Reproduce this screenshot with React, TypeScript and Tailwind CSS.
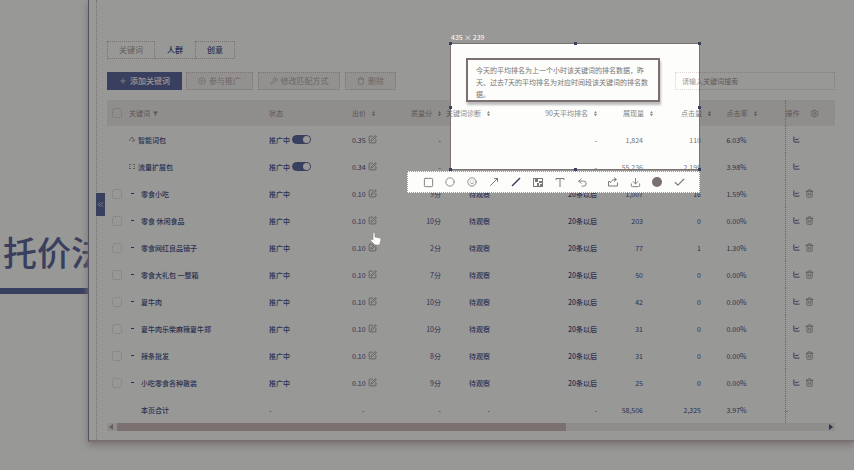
import type { ReactNode } from "react";
import {
  Check,
  ChevronsLeft,
  Circle,
  CirclePlay,
  Download,
  Filter,
  LineChart,
  MoveUpRight,
  Plus,
  Settings,
  Smile,
  Square,
  SquarePen,
  Trash,
  Trash2,
  Undo2,
  Wrench,
} from "lucide-react";

type Row = {
  name: string;
  group?: "smart" | "flow";
  price: string;
  score: string;
  diagnosis: string;
  rank: string;
  views: string;
  clicks: string;
  rate: string;
};

const keyword = (name: string, score: string, views: string, clicks: string, rate: string): Row => ({
  name,
  price: "0.10",
  score,
  diagnosis: "待观察",
  rank: "20条以后",
  views,
  clicks,
  rate,
});

const rows: Row[] = [
  { name: "智能词包", group: "smart", price: "0.35", score: "-", diagnosis: "", rank: "-", views: "1,824", clicks: "110", rate: "6.03%" },
  { name: "流量扩展包", group: "flow", price: "0.34", score: "-", diagnosis: "", rank: "-", views: "55,236", clicks: "2,195", rate: "3.98%" },
  keyword("零食小吃", "9分", "1,007", "16", "1.59%"),
  keyword("零食 休闲食品", "10分", "203", "0", "0.00%"),
  keyword("零食网红良品铺子", "2分", "77", "1", "1.30%"),
  keyword("零食大礼包 一整箱", "7分", "50", "0", "0.00%"),
  keyword("夏牛肉", "10分", "42", "0", "0.00%"),
  keyword("夏牛肉乐柴麻辣夏牛郑", "10分", "31", "0", "0.00%"),
  keyword("辣条批发", "8分", "31", "0", "0.00%"),
  keyword("小吃零食各种散装", "9分", "25", "0", "0.00%"),
];

function Sort() {
  return (
    <svg viewBox="0 0 4 7" className="h-[7px] w-[3px] shrink-0" fill="currentColor" aria-hidden="true">
      <path d="M2 0 4 3H0Z M2 7 0 4H4Z" />
    </svg>
  );
}

function Head({ children, right, tone = "text-[#9c8f8f]", pad = "" }: { children: ReactNode; right?: boolean; tone?: string; pad?: string }) {
  return (
    <th className={`p-0 font-normal ${tone} ${pad}`}>
      <span className={`flex items-center gap-[6px] whitespace-nowrap ${right ? "justify-end" : ""}`}>
        {children}
        <Sort />
      </span>
    </th>
  );
}

function Tool({ label, children }: { label: string; children: ReactNode }) {
  return (
    <button type="button" aria-label={label} className="flex h-5 w-[22px] items-center justify-center">
      {children}
    </button>
  );
}

const disabledButton =
  "flex h-[18px] items-center justify-center gap-[3px] border border-dotted border-[#cfc4c4] bg-[#f5f1f1] text-[8px] text-[#b8abab]";

export default function App() {
  return (
    <div className="relative flex h-screen overflow-hidden bg-[#fdfdfb] font-['Noto_Sans_CJK_SC',sans-serif] text-[7px] leading-[10px] text-[#4a5288]">
      <aside className="w-[88px] shrink-0 overflow-hidden pt-[228px]">
        <h1 className="h-[60px] pl-[3px] text-[34px] leading-[48px] font-medium whitespace-nowrap text-[#60699d]">托价法</h1>
        <div className="h-[6px] bg-[#60699d]" />
      </aside>

      <main className="mb-7 flex min-w-0 flex-1 border-b-2 border-l border-b-[#cbbbbb] border-l-[#8f88a0] pl-[7px] shadow-[0_3px_7px_#c8bebe]">
        <div className="w-[9px] shrink-0 border-l border-dotted border-[#cbbbbb] pt-[193px]">
          <button type="button" aria-label="收起侧栏" className="-ml-px flex h-[23px] w-[9px] items-center justify-center bg-[#60699d] text-[#f4eeee]">
            <ChevronsLeft size={9} />
          </button>
        </div>

        <div className="min-w-0 flex-1 pt-[41px] pr-[19px] pl-[2px]">
          <nav className="flex h-[18px] text-[8px]">
            <button type="button" className="w-12 border border-dotted border-[#cbbbbb] text-[#a89a9a]">关键词</button>
            <button type="button" className="w-10 border-b border-dotted border-[#cbbbbb] font-medium">人群</button>
            <button type="button" className="w-10 border border-dotted border-[#cbbbbb] font-medium">创意</button>
          </nav>

          <div className="mt-[13px] flex h-[18px]">
            <button type="button" className="flex w-[75px] items-center justify-center gap-[3px] bg-[#60699d] text-[8px] font-medium text-[#fdf6f2]">
              <Plus size={8} />
              添加关键词
            </button>
            <button type="button" disabled className={`ml-1 w-[67px] ${disabledButton}`}>
              <CirclePlay size={8} />
              参与推广
            </button>
            <button type="button" disabled className={`ml-[5px] w-[82px] ${disabledButton}`}>
              <Wrench size={8} />
              修改匹配方式
            </button>
            <button type="button" disabled className={`ml-[5px] w-[51px] ${disabledButton}`}>
              <Trash size={8} />
              删除
            </button>
            <input
              type="search"
              aria-label="搜索关键词"
              placeholder="请输入关键词搜索"
              className="ml-auto w-[160px] border border-dotted border-[#ded6d6] bg-transparent pl-[6px] text-[7px] outline-none placeholder:text-[#a09595]"
            />
          </div>

          <table className="mt-[10px] w-full table-fixed border-collapse text-left">
            <colgroup>
              <col />
              <col className="w-[83px]" />
              <col className="w-[55px]" />
              <col className="w-[41px]" />
              <col className="w-[49px]" />
              <col className="w-[107px]" />
              <col className="w-[56px]" />
              <col className="w-[58px]" />
              <col className="w-[74px]" />
              <col className="w-[50px]" />
            </colgroup>
            <thead>
              <tr className="h-[26px] bg-[linear-gradient(90deg,#f0ecec_0,#f0ecec_343px,transparent_343px,transparent_593px,#f0ecec_593px)] text-[#9c8f8f]">
                <th className="p-0 font-normal">
                  <span className="flex items-center pl-[5px]">
                    <input type="checkbox" aria-label="全选" className="size-[10px] appearance-none rounded-[3px] border border-dotted border-[#c4b8b8]" />
                    <span className="ml-[7px]">关键词</span>
                    <Filter size={5} fill="currentColor" className="ml-[3px]" />
                  </span>
                </th>
                <th className="p-0 pl-[7px] font-normal">状态</th>
                <Head pad="pl-[7px]">出价</Head>
                <Head right>质量分</Head>
                <Head right tone="text-[#858585]">关键词诊断</Head>
                <Head right tone="text-[#858585]">90天平均排名</Head>
                <Head right tone="text-[#858585]">展现量</Head>
                <Head right tone="text-[#858585]">点击量</Head>
                <Head right pad="pr-7">点击率</Head>
                <th className="border-l border-dotted border-[#b8acac] p-0 font-normal">
                  <span className="flex items-center gap-[10px]">
                    操作
                    <Settings size={9} />
                  </span>
                </th>
              </tr>
            </thead>
            <tbody>
              {rows.map((row) => {
                const metric = row.group ? "text-[#757575]" : "";
                return (
                  <tr key={row.name} className="h-[27px]">
                    <td className="p-0">
                      {row.group ? (
                        <span className="flex items-center pl-[22px]">
                          <svg viewBox="0 0 7 7" className="size-[7px]" fill="none" stroke="#9c8f8f" aria-hidden="true">
                            {row.group === "smart" ? (
                              <path d="M0 5 3 1 6 5M3 6 5 4" />
                            ) : (
                              <path d="M0 1.5H2M4 1.5H6M0 3.5H1M5 3.5H6M0 5.5H2M4 5.5H6" />
                            )}
                          </svg>
                          <span className="ml-[2px] font-medium">{row.name}</span>
                        </span>
                      ) : (
                        <span className="flex items-center pl-[5px]">
                          <input
                            type="checkbox"
                            aria-label={row.name}
                            className="size-[10px] appearance-none rounded-[3px] border border-dotted border-[#d4caca]"
                          />
                          <span className="ml-[9px] h-px w-[3px] bg-[#4a5288]" />
                          <span className="ml-[7px] font-medium whitespace-nowrap">{row.name}</span>
                        </span>
                      )}
                    </td>
                    <td className="p-0 pl-[7px]">
                      <span className="flex items-center gap-[2px] font-medium">
                        推广中
                        {row.group && (
                          <input
                            type="checkbox"
                            role="switch"
                            defaultChecked
                            aria-label={`${row.name}推广`}
                            className="flex h-[9px] w-[19px] appearance-none items-center justify-end rounded-full border border-[#60699d] bg-[#60699d] before:size-[7px] before:rounded-full before:bg-[#fdfdfb]"
                          />
                        )}
                      </span>
                    </td>
                    <td className="p-0 pl-[7px]">
                      <span className="flex items-center gap-[2px]">
                        {row.price}
                        <button type="button" aria-label={`修改${row.name}出价`} className="text-[#8f8585]">
                          <SquarePen size={9} />
                        </button>
                      </span>
                    </td>
                    <td className="p-0 text-right">{row.score}</td>
                    <td className="p-0 text-right font-medium">{row.diagnosis}</td>
                    <td className={`p-0 text-right font-medium ${metric}`}>{row.rank}</td>
                    <td className={`p-0 pr-[10px] text-right ${metric}`}>{row.views}</td>
                    <td className={`p-0 pr-[10px] text-right ${metric}`}>{row.clicks}</td>
                    <td className="p-0 pr-[38px] text-right">{row.rate}</td>
                    <td className="border-l border-dotted border-[#b8acac] p-0 pl-[7px]">
                      <span className="flex items-center gap-[5px]">
                        <button type="button" aria-label={`${row.name}报表`}>
                          <LineChart size={7} strokeWidth={3} />
                        </button>
                        {!row.group && (
                          <button type="button" aria-label={`删除${row.name}`} className="text-[#8f8585]">
                            <Trash2 size={9} />
                          </button>
                        )}
                      </span>
                    </td>
                  </tr>
                );
              })}
            </tbody>
            <tfoot>
              <tr className="h-[27px]">
                <td className="p-0 pl-[34px] font-medium">本页合计</td>
                <td className="p-0 pl-[7px]">-</td>
                <td className="p-0 pl-[17px]">-</td>
                <td className="p-0 text-right">-</td>
                <td className="p-0 text-right">-</td>
                <td className="p-0 text-right">-</td>
                <td className="p-0 pr-[10px] text-right">58,506</td>
                <td className="p-0 pr-[10px] text-right">2,325</td>
                <td className="p-0 pr-[38px] text-right">3.97%</td>
                <td className="border-l border-dotted border-[#b8acac] p-0">-</td>
              </tr>
            </tfoot>
          </table>

          <div className="flex h-[8px] items-center bg-[#eeeae9] px-[2px]">
            <svg viewBox="0 0 4 6" className="mr-1 h-[6px] w-1" fill="#a89a9a" aria-hidden="true">
              <path d="M4 0V6L0 3Z" />
            </svg>
            <div className="h-[8px] w-[62%] bg-[#cbbbbb]" />
            <svg viewBox="0 0 4 6" className="ml-auto h-[6px] w-1" fill="#4a5288" aria-hidden="true">
              <path d="M0 0V6L4 3Z" />
            </svg>
          </div>
        </div>
      </main>

      {/* Screen-capture selection: its spread shadow dims the rest of the page. */}
      <section className="absolute top-[43px] left-[450px] h-[127px] w-[250px] border border-[#7a7070] shadow-[0_0_0_999px_rgba(0,0,0,0.4)]">
        <span className="absolute -top-[12px] left-0 text-[7px] whitespace-nowrap text-white">435 × 239</span>
        <p className="mt-[14px] ml-[15px] w-[194px] border-2 border-[#7a7070] bg-[#fdfdfb] pt-1 pl-2 text-[7px] leading-[12px] text-[#757575] shadow-[1px_3px_2px_#bdbdbd]">
          今天的平均排名为上一个小时该关键词的排名数据，昨
          <br />
          天、过去7天的平均排名为对应时间段该关键词的排名数
          <br />
          据。
        </p>
        <i className="absolute -top-[2px] -left-[2px] size-[3px] bg-[#3a3f5e]" />
        <i className="absolute -top-[2px] left-1/2 -ml-px size-[3px] bg-[#3a3f5e]" />
        <i className="absolute -top-[2px] -right-[2px] size-[3px] bg-[#3a3f5e]" />
        <i className="absolute top-1/2 -left-[2px] -mt-px size-[3px] bg-[#3a3f5e]" />
        <i className="absolute top-1/2 -right-[2px] -mt-px size-[3px] bg-[#3a3f5e]" />
        <i className="absolute -bottom-[2px] -left-[2px] size-[3px] bg-[#3a3f5e]" />
        <i className="absolute -bottom-[2px] left-1/2 -ml-px size-[3px] bg-[#3a3f5e]" />
        <i className="absolute -right-[2px] -bottom-[2px] size-[3px] bg-[#3a3f5e]" />
      </section>

      <div role="toolbar" aria-label="截图工具" className="absolute top-[171px] left-[407px] flex h-[22px] w-[293px] items-center justify-between border border-dotted border-[#999999] bg-[#fdfdfb] px-[9px] text-[#7c7878]">
        <Tool label="矩形"><Square size={11} /></Tool>
        <Tool label="椭圆"><Circle size={10} /></Tool>
        <Tool label="表情"><Smile size={10} /></Tool>
        <Tool label="箭头"><MoveUpRight size={12} /></Tool>
        <Tool label="画笔">
          <svg viewBox="0 0 10 10" className="size-[10px]" fill="none" stroke="#3a3f5e" aria-hidden="true">
            <path d="M1 9 9 1" strokeWidth="1.4" />
          </svg>
        </Tool>
        <Tool label="马赛克">
          <svg viewBox="0 0 10 10" className="size-[10px]" fill="#7c7878" aria-hidden="true">
            <path d="M0 1H10V10H0ZM1 2V9H9V2Z" fillRule="evenodd" />
            <path d="M2 2H5V5H2ZM6 4H9V6H6ZM4 6H6V9H4ZM7 7H9V9H7Z" />
          </svg>
        </Tool>
        <Tool label="文字">
          <svg viewBox="0 0 10 10" className="size-[10px]" fill="none" stroke="currentColor" aria-hidden="true">
            <path d="M1 3V1.5H9V3M5 1.5V10" />
          </svg>
        </Tool>
        <Tool label="撤销"><Undo2 size={11} /></Tool>
        <span className="w-[9px]" />
        <Tool label="分享">
          <svg viewBox="0 0 10 10" className="size-[10px]" fill="none" stroke="currentColor" aria-hidden="true">
            <path d="M2 4.5H.5V9H9.5V5.5M2.5 6Q3 2.5 8 2.5M6 .5 8.5 2.5 6 4.5" />
          </svg>
        </Tool>
        <Tool label="保存"><Download size={11} /></Tool>
        <Tool label="颜色"><span className="size-[10px] rounded-full bg-[#7a7070]" /></Tool>
        <Tool label="完成"><Check size={13} /></Tool>
      </div>

      <svg viewBox="0 0 12 14" className="absolute top-[232px] left-[370px] h-[14px] w-3" aria-hidden="true">
        <path d="M3 1Q4 0 5 1V5L10 6Q11 6 11 8L10 11V13H5L1 9Q0 7 2 7L3 8Z" fill="#fff" stroke="#8a8080" strokeWidth=".6" />
      </svg>
    </div>
  );
}
